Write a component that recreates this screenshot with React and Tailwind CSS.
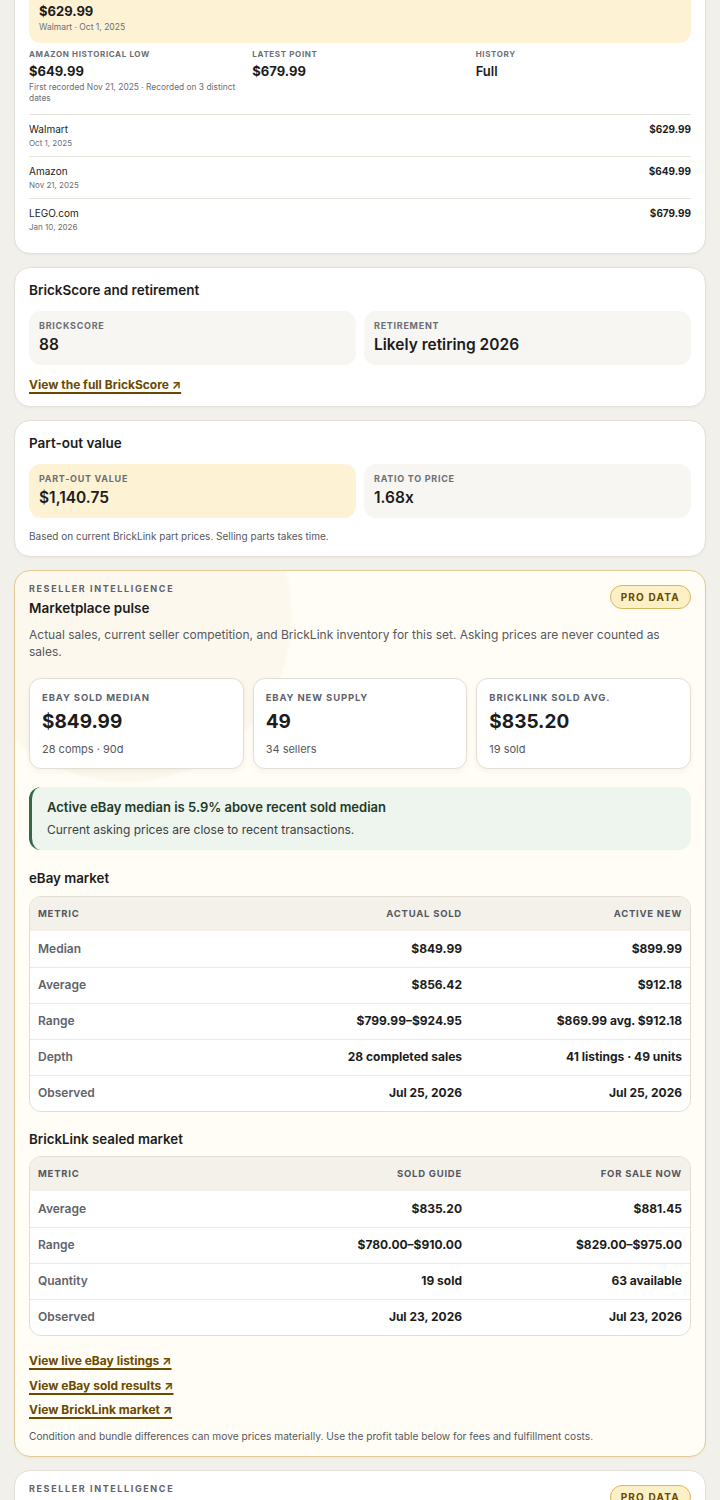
import React from "react";

const label = "text-[8px] font-bold uppercase tracking-[0.08em] text-[#6b6e74]";
const boxLabel = "text-[9px] font-bold uppercase tracking-[0.08em] text-[#6b6e74]";
const link =
  "inline-block text-[12px] font-bold leading-[15px] text-[#6b4a00] underline decoration-[1.5px] underline-offset-[3px]";

const priceRows = [
  { store: "Walmart", date: "Oct 1, 2025", price: "$629.99" },
  { store: "Amazon", date: "Nov 21, 2025", price: "$649.99" },
  { store: "LEGO.com", date: "Jan 10, 2026", price: "$679.99" },
];

const stats = [
  { label: "eBay sold median", value: "$849.99", sub: "28 comps · 90d" },
  { label: "eBay new supply", value: "49", sub: "34 sellers" },
  { label: "BrickLink sold avg.", value: "$835.20", sub: "19 sold" },
];

const ebayRows = [
  ["Median", "$849.99", "$899.99"],
  ["Average", "$856.42", "$912.18"],
  ["Range", "$799.99–$924.95", "$869.99 avg. $912.18"],
  ["Depth", "28 completed sales", "41 listings · 49 units"],
  ["Observed", "Jul 25, 2026", "Jul 25, 2026"],
];

const brickRows = [
  ["Average", "$835.20", "$881.45"],
  ["Range", "$780.00–$910.00", "$829.00–$975.00"],
  ["Quantity", "19 sold", "63 available"],
  ["Observed", "Jul 23, 2026", "Jul 23, 2026"],
];

const Card = ({ className = "", children }) => (
  <section
    className={`rounded-2xl border border-[#e4e0d7] bg-white px-[14px] shadow-[0_1px_3px_rgba(0,0,0,0.04)] ${className}`}
  >
    {children}
  </section>
);

const ProPill = () => (
  <span className="flex h-6 items-center rounded-full border border-[#d8b660] bg-[#fdf0c6] px-[10px] text-[10px] font-bold uppercase tracking-[0.12em] text-[#6b4a00]">
    Pro data
  </span>
);

const MetricBox = ({ title, value, tone = "gray" }) => (
  <div
    className={`rounded-xl p-[10px] ${tone === "yellow" ? "bg-[#fdf2d3]" : "bg-[#f7f6f2]"}`}
  >
    <div className={`${boxLabel} leading-[10px]`}>{title}</div>
    <div className="mt-1 text-[15.5px] font-semibold leading-5 text-[#1c1c1c]">{value}</div>
  </div>
);

const MarketTable = ({ cols, rows }) => (
  <div className="overflow-hidden rounded-xl border border-[#e2ded4] bg-white">
    <table className="w-full table-fixed border-collapse">
      <thead>
        <tr className="bg-[#f3f1ea]">
          {cols.map((c, i) => (
            <th
              key={c}
              className={`h-[34px] px-2 text-[9.5px] font-bold uppercase tracking-[0.08em] text-[#55585e] ${
                i === 0 ? "text-left" : "text-right"
              }`}
            >
              {c}
            </th>
          ))}
        </tr>
      </thead>
      <tbody>
        {rows.map((r, idx) => (
          <tr key={r[0]} className={idx > 0 ? "border-t border-[#ece9e2]" : ""}>
            <td className="h-9 px-2 text-left text-[12px] font-semibold text-[#5f636b]">{r[0]}</td>
            <td className="h-9 px-2 text-right text-[12px] font-bold text-[#1c1c1c]">{r[1]}</td>
            <td className="h-9 px-2 text-right text-[12px] font-bold text-[#1c1c1c]">{r[2]}</td>
          </tr>
        ))}
      </tbody>
    </table>
  </div>
);

export default function App() {
  return (
    <div className="min-h-screen overflow-hidden bg-[#f2f0eb] px-[14px] pb-10 font-['Inter',sans-serif] text-[#1c1c1c]">
      <div className="flex flex-col gap-[13px]">
        {/* price history */}
        <Card className="-mt-[38px] pt-[14px] pb-[13px]">
          <div className="rounded-xl bg-[#fdf2d3] p-[10px]">
            <div className={`${label} leading-3`}>Lowest recorded price</div>
            <div className="mt-1 text-[13px] font-bold leading-4">$629.99</div>
            <div className="mt-[2px] text-[8.5px] leading-3 text-[#6b6e74]">Walmart · Oct 1, 2025</div>
          </div>
          <div className="mt-[6px] grid grid-cols-3 gap-x-2">
            <div>
              <div className={`${label} leading-[10px]`}>Amazon historical low</div>
              <div className="mt-1 text-[13px] font-bold leading-4">$649.99</div>
              <div className="mt-[3px] text-[8.4px] leading-[11px] text-[#6b6e74]">
                First recorded Nov 21, 2025 · Recorded on 3 distinct dates
              </div>
            </div>
            <div>
              <div className={`${label} leading-[10px]`}>Latest point</div>
              <div className="mt-1 text-[13px] font-bold leading-4">$679.99</div>
            </div>
            <div>
              <div className={`${label} leading-[10px]`}>History</div>
              <div className="mt-1 text-[13px] font-semibold leading-4">Full</div>
            </div>
          </div>
          <div className="mt-[10px] border-t border-[#e6e3dc]">
            {priceRows.map((row, i) => (
              <div
                key={row.store}
                className={`flex items-start justify-between py-[7px] ${
                  i < priceRows.length - 1 ? "border-b border-[#e6e3dc]" : ""
                }`}
              >
                <div>
                  <div className="text-[10px] leading-[14px] text-[#222]">{row.store}</div>
                  <div className="mt-px text-[8px] leading-3 text-[#6b6e74]">{row.date}</div>
                </div>
                <div className="text-[10px] font-bold leading-[14px]">{row.price}</div>
              </div>
            ))}
          </div>
        </Card>

        {/* brickscore */}
        <Card className="pt-[14px] pb-[14px]">
          <h2 className="text-[13.5px] font-semibold leading-4">BrickScore and retirement</h2>
          <div className="mt-[13px] grid grid-cols-2 gap-2">
            <MetricBox title="BrickScore" value="88" />
            <MetricBox title="Retirement" value="Likely retiring 2026" />
          </div>
          <div className="mt-[12px] flex leading-[15px]">
            <a href="#" className={`${link} text-[11.5px]`}>
              View the full BrickScore ↗
            </a>
          </div>
        </Card>

        {/* part-out */}
        <Card className="pt-[14px] pb-[13px]">
          <h2 className="text-[13.5px] font-semibold leading-4">Part-out value</h2>
          <div className="mt-[13px] grid grid-cols-2 gap-2">
            <MetricBox title="Part-out value" value="$1,140.75" tone="yellow" />
            <MetricBox title="Ratio to price" value="1.68x" />
          </div>
          <p className="mt-[11px] text-[10px] leading-[14px] text-[#55585e]">
            Based on current BrickLink part prices. Selling parts takes time.
          </p>
        </Card>

        {/* marketplace pulse */}
        <section className="rounded-2xl border border-[#e0cb96] bg-[#fffdf6] bg-[radial-gradient(circle_at_16%_5%,#fcf8ee_0,#fcf8ee_165px,transparent_168px)] px-[14px] pt-[12px] pb-[13px] shadow-[0_1px_3px_rgba(0,0,0,0.04)]">
          <div className="flex items-start justify-between">
            <div>
              <div className="text-[9px] font-bold uppercase leading-3 tracking-[0.18em] text-[#5f636b]">
                Reseller intelligence
              </div>
              <h2 className="mt-[5px] text-[13.5px] font-semibold leading-4">Marketplace pulse</h2>
            </div>
            <div className="mt-[2px]">
              <ProPill />
            </div>
          </div>
          <p className="mt-[10px] text-[12px] leading-[17px] text-[#55585e]">
            Actual sales, current seller competition, and BrickLink inventory for this set. Asking
            prices are never counted as sales.
          </p>

          <div className="mt-[18px] grid grid-cols-3 gap-[9px]">
            {stats.map((s) => (
              <div
                key={s.label}
                className="rounded-xl border border-[#e2ded4] bg-white px-3 pt-[13px] pb-[12px] shadow-[0_2px_6px_rgba(0,0,0,0.05)]"
              >
                <div className="text-[9.5px] font-bold uppercase leading-3 tracking-[0.09em] text-[#5f636b]">
                  {s.label}
                </div>
                <div className="mt-[6px] text-[19px] font-bold leading-6">{s.value}</div>
                <div className="mt-2 text-[11px] leading-[14px] text-[#55585e]">{s.sub}</div>
              </div>
            ))}
          </div>

          <div className="mt-[18px] rounded-xl border-l-[3px] border-[#2e6a45] bg-[#edf5ee] py-3 pr-4 pl-[15px]">
            <div className="text-[13px] font-semibold leading-4 text-[#1f3a28]">
              Active eBay median is 5.9% above recent sold median
            </div>
            <div className="mt-[7px] text-[12px] leading-4 text-[#3a3f44]">
              Current asking prices are close to recent transactions.
            </div>
          </div>

          <h3 className="mt-5 text-[13.3px] font-semibold leading-4">eBay market</h3>
          <div className="mt-[10px]">
            <MarketTable cols={["Metric", "Actual sold", "Active new"]} rows={ebayRows} />
          </div>

          <h3 className="mt-[19px] text-[13.3px] font-semibold leading-4">BrickLink sealed market</h3>
          <div className="mt-[9px]">
            <MarketTable cols={["Metric", "Sold guide", "For sale now"]} rows={brickRows} />
          </div>

          <div className="mt-[17px] flex flex-col items-start gap-[9.5px] leading-[15px]">
            <a href="#" className={link}>View live eBay listings ↗</a>
            <a href="#" className={link}>View eBay sold results ↗</a>
            <a href="#" className={link}>View BrickLink market ↗</a>
          </div>
          <p className="mt-[12px] text-[10.2px] leading-[14px] text-[#55585e]">
            Condition and bundle differences can move prices materially. Use the profit table below for
            fees and fulfillment costs.
          </p>
        </section>

        {/* next reseller card */}
        <section className="rounded-2xl border border-[#e4e0d7] bg-white px-[14px] pt-[12px] pb-[13px] shadow-[0_1px_3px_rgba(0,0,0,0.04)]">
          <div className="flex items-start justify-between">
            <div>
              <div className="text-[9px] font-bold uppercase leading-3 tracking-[0.18em] text-[#5f636b]">
                Reseller intelligence
              </div>
              <h2 className="mt-[5px] text-[13.5px] font-semibold leading-4">Flip profit estimate</h2>
            </div>
            <div className="mt-[2px]">
              <ProPill />
            </div>
          </div>
          <p className="mt-[10px] text-[12px] leading-[17px] text-[#55585e]">
            Net proceeds after marketplace fees, shipping and packaging.
          </p>
        </section>
      </div>
    </div>
  );
}
